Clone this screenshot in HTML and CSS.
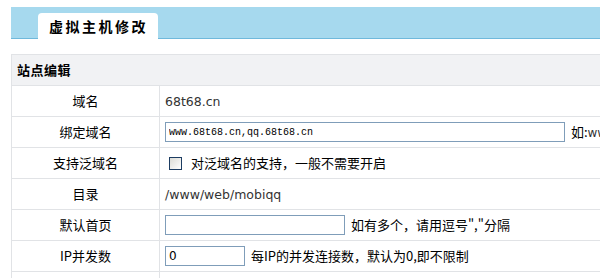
FILE: index.html
```html
<!DOCTYPE html>
<html lang="zh-CN">
<head>
    <meta charset="UTF-8">
    <title>虚拟主机修改</title>
    <link rel="stylesheet" href="styles.css">
</head>
<body>
    <div class="page">
        <!-- Tab bar -->
        <div class="tab-bar">
            <div class="tab">虚拟主机修改</div>
        </div>

        <table class="form-table">
            <tr class="head-row">
                <th colspan="2">站点编辑</th>
            </tr>
            <tr>
                <td class="label">域名</td>
                <td class="value"><span class="latin">68t68.cn</span></td>
            </tr>
            <tr>
                <td class="label">绑定域名</td>
                <td class="value">
                    <input type="text" class="input input-wide" value="www.68t68.cn,qq.68t68.cn">
                    <span class="hint">如:<span class="latin">www.68t68.cn,qq.68t68.cn</span></span>
                </td>
            </tr>
            <tr>
                <td class="label">支持泛域名</td>
                <td class="value">
                    <span class="check"></span>
                    <span class="hint">对泛域名的支持，一般不需要开启</span>
                </td>
            </tr>
            <tr>
                <td class="label">目录</td>
                <td class="value"><span class="latin">/www/web/mobiqq</span></td>
            </tr>
            <tr>
                <td class="label">默认首页</td>
                <td class="value">
                    <input type="text" class="input input-mid" value="">
                    <span class="hint">如有多个，请用逗号","分隔</span>
                </td>
            </tr>
            <tr>
                <td class="label">IP并发数</td>
                <td class="value">
                    <input type="text" class="input input-small" value="0">
                    <span class="hint">每IP的并发连接数，默认为0,即不限制</span>
                </td>
            </tr>
            <tr>
                <td class="label">&nbsp;</td>
                <td class="value">&nbsp;</td>
            </tr>
        </table>
    </div>
</body>
</html>
```

FILE: styles.css
```css
html, body {
    margin: 0;
    padding: 0;
    overflow: hidden;
    background-color: #fff;
}

body {
    font-family: "Noto Sans CJK SC", sans-serif;
    font-size: 13px;
    color: #000;
}

.page {
    width: 900px;
    padding: 7px 0 0 11px;
}

.tab-bar {
    height: 31px;
    background-color: #a6d9ee;
    border-bottom: 1px solid #6fb9dc;
    display: flex;
    align-items: flex-end;
    padding-left: 27px;
}

.tab {
    width: 120px;
    height: 26px;
    margin-bottom: -1px;
    background-color: #fff;
    border-radius: 4px 4px 0 0;
    font-size: 14px;
    font-weight: bold;
    letter-spacing: 2.5px;
    line-height: 26px;
    padding-left: 11px;
    box-sizing: border-box;
}

.form-table {
    margin-top: 15px;
    border-collapse: collapse;
    width: 900px;
    border: 1px solid #e1e3e6;
}

.form-table th,
.form-table td {
    border: 1px solid #e1e3e6;
    height: 30px;
    padding: 0;
    line-height: 16px;
    white-space: nowrap;
}

.head-row th {
    background-color: #f1f2f4;
    text-align: left;
    padding-left: 5px;
    font-size: 13px;
    letter-spacing: 0.5px;
}

.label {
    width: 147px;
    text-align: center;
}

.value {
    padding-left: 5px !important;
}

.latin {
    font-family: "DejaVu Sans", sans-serif;
    font-size: 12.5px;
    color: #333;
}

.hint .latin {
    font-size: 12px;
}

.input {
    height: 20px;
    box-sizing: border-box;
    border: 1px solid #7f9db9;
    padding: 0 3px;
    margin: 0 3px 0 0;
    font-family: "Liberation Mono", monospace;
    font-size: 10px;
    vertical-align: middle;
    color: #000;
}

.input-wide {
    width: 400px;
}

.input-mid {
    width: 180px;
}

.input-small {
    width: 80px;
    font-family: "DejaVu Sans", sans-serif;
    font-size: 12px;
}

.hint {
    vertical-align: middle;
}

.check {
    display: inline-block;
    width: 13px;
    height: 13px;
    box-sizing: border-box;
    border: 1px solid #1d3d62;
    background: linear-gradient(135deg, #dcdcd6, #fff);
    vertical-align: middle;
    margin: 0 6px 0 4px;
}
```
